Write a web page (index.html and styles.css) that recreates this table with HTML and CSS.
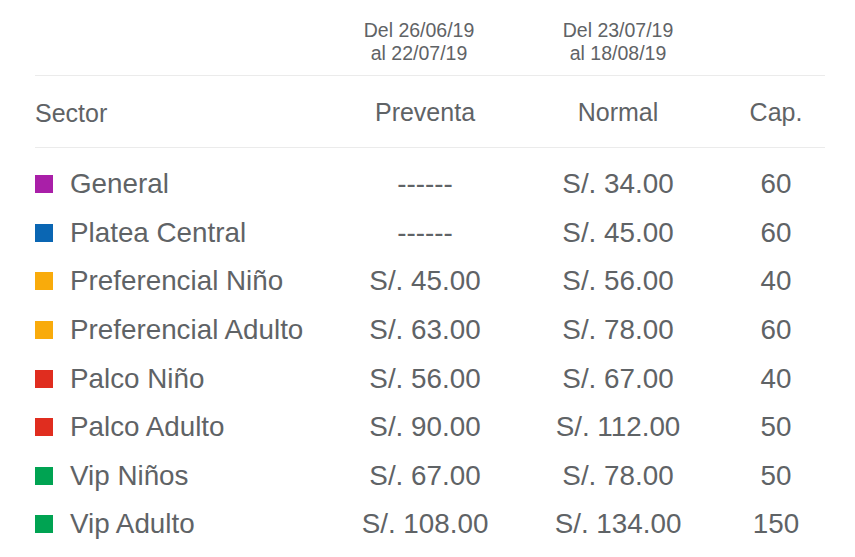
FILE: index.html
```html
<!DOCTYPE html>
<html lang="es">
<head>
<meta charset="utf-8">
<link rel="stylesheet" href="styles.css">
</head>
<body>
<div class="prices">
  <div class="row dates">
    <div></div>
    <div class="c first-date">Del 26/06/19<br>al 22/07/19</div>
    <div class="c">Del 23/07/19<br>al 18/08/19</div>
    <div></div>
  </div>
  <div class="row head">
    <div class="sector-h">Sector</div>
    <div class="c pre-h">Preventa</div>
    <div class="c">Normal</div>
    <div class="c cap">Cap.</div>
  </div>
  <div class="body">
    <div class="row item"><div class="name"><span class="sw purple"></span>General</div><div class="c">------</div><div class="c">S/. 34.00</div><div class="c cap">60</div></div>
    <div class="row item"><div class="name"><span class="sw blue"></span>Platea Central</div><div class="c">------</div><div class="c">S/. 45.00</div><div class="c cap">60</div></div>
    <div class="row item"><div class="name"><span class="sw orange"></span>Preferencial Niño</div><div class="c">S/. 45.00</div><div class="c">S/. 56.00</div><div class="c cap">40</div></div>
    <div class="row item"><div class="name"><span class="sw orange"></span>Preferencial Adulto</div><div class="c">S/. 63.00</div><div class="c">S/. 78.00</div><div class="c cap">60</div></div>
    <div class="row item"><div class="name"><span class="sw red"></span>Palco Niño</div><div class="c">S/. 56.00</div><div class="c">S/. 67.00</div><div class="c cap">40</div></div>
    <div class="row item"><div class="name"><span class="sw red"></span>Palco Adulto</div><div class="c">S/. 90.00</div><div class="c">S/. 112.00</div><div class="c cap">50</div></div>
    <div class="row item"><div class="name"><span class="sw green"></span>Vip Niños</div><div class="c">S/. 67.00</div><div class="c">S/. 78.00</div><div class="c cap">50</div></div>
    <div class="row item"><div class="name"><span class="sw green"></span>Vip Adulto</div><div class="c">S/. 108.00</div><div class="c">S/. 134.00</div><div class="c cap">150</div></div>
  </div>
</div>
</body>
</html>
```
FILE: styles.css
```css
html, body {
  margin: 0;
  padding: 0;
  background: #ffffff;
}
body {
  font-family: "Liberation Sans", Arial, Helvetica, sans-serif;
  color: #5f6366;
}
.prices {
  margin: 0 30px 0 35px;
}
.row {
  display: grid;
  grid-template-columns: 295px 190px 196px 1fr;
  align-items: center;
}
.c {
  text-align: center;
}
.cap {
  padding-left: 11px;
}
.dates {
  font-size: 19.5px;
  line-height: 23px;
  padding: 19px 0 10px;
  border-bottom: 1px solid #ebebeb;
}
.first-date {
  padding-right: 12px;
}
.head {
  font-size: 25px;
  height: 71px;
  border-bottom: 1px solid #ebebeb;
}
.sector-h {
  padding-top: 4px;
}
.pre-h {
  padding-top: 5px;
}
.head .c {
  padding-top: 1px;
}
.body {
  padding-top: 12px;
}
.item {
  height: 48.57px;
  font-size: 27.8px;
}
.name {
  display: flex;
  align-items: center;
}
.sw {
  width: 18px;
  height: 18px;
  margin-right: 17px;
  flex: none;
}
.purple { background: #a91fa8; }
.blue { background: #0a66b3; }
.orange { background: #f9ab0b; }
.red { background: #e02d1f; }
.green { background: #00a352; }
```
